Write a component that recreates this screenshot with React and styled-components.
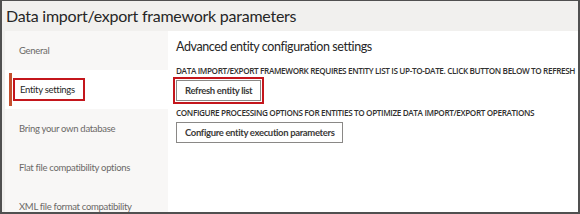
import styled, { createGlobalStyle } from "styled-components";

const GlobalStyle = createGlobalStyle`
  html, body {
    margin: 0;
    padding: 0;
    background: #ffffff;
  }
  body {
    font-family: Lato, "Open Sans", "Liberation Sans", sans-serif;
  }
`;

const navItems = [
  "General",
  "Entity settings",
  "Bring your own database",
  "Flat file compatibility options",
  "XML file format compatibility",
];

const App = () => {
  return (
    <>
      <GlobalStyle />
      <Frame>
        <Header>
          <Title>Data import/export framework parameters</Title>
        </Header>
        <Body>
          <Nav>
            {navItems.map((item) => (
              <NavItem key={item} $selected={item === "Entity settings"}>
                {item === "Entity settings" ? (
                  <>
                    <Accent />
                    <Marked>{item}</Marked>
                  </>
                ) : (
                  <NavLabel>{item}</NavLabel>
                )}
              </NavItem>
            ))}
          </Nav>
          <Content>
            <Heading>Advanced entity configuration settings</Heading>
            <Caption>
              DATA IMPORT/EXPORT FRAMEWORK REQUIRES ENTITY LIST IS UP-TO-DATE. CLICK BUTTON BELOW TO REFRESH
            </Caption>
            <ButtonRow>
              <ActionButton $marked>Refresh entity list</ActionButton>
            </ButtonRow>
            <Caption>
              CONFIGURE PROCESSING OPTIONS FOR ENTITIES TO OPTIMIZE DATA IMPORT/EXPORT OPERATIONS
            </Caption>
            <ButtonRow>
              <ActionButton>Configure entity execution parameters</ActionButton>
            </ButtonRow>
          </Content>
        </Body>
      </Frame>
    </>
  );
};

export default App;

const Frame = styled.div`
  box-sizing: border-box;
  width: 580px;
  height: 214px;
  border: 2px solid #505050;
  border-top-width: 1px;
  display: flex;
  flex-direction: column;
  overflow: hidden;
  background: #f1f0ee;
`;

const Header = styled.div`
  height: 29px;
  display: flex;
  align-items: center;
  padding-left: 4px;
  background: #f1f0ee;
`;

const Title = styled.h1`
  margin: 0;
  font-size: 16px;
  font-weight: 400;
  letter-spacing: -0.25px;
  color: #262626;
`;

const Body = styled.div`
  flex: 1;
  display: flex;
  padding-left: 3px;
  padding-top: 1px;
  min-height: 0;
`;

const Nav = styled.div`
  width: 163px;
  display: flex;
  flex-direction: column;
  background: #f8f7f6;
`;

const NavItem = styled.div`
  position: relative;
  height: 39px;
  flex-shrink: 0;
  display: flex;
  align-items: center;
  padding-left: 14px;
  background: ${(p) => (p.$selected ? "#ffffff" : "transparent")};
  margin-right: ${(p) => (p.$selected ? "-2px" : "0")};
`;

const NavLabel = styled.span`
  font-size: 9.5px;
  letter-spacing: -0.3px;
  color: #6b6967;
`;

const Accent = styled.span`
  position: absolute;
  left: 4px;
  top: 3px;
  bottom: 3px;
  width: 3px;
  background: #c4502f;
`;

const Marked = styled.span`
  margin-left: -6px;
  padding: 4px 8px 4px 5px;
  border: 2px solid #c4161c;
  font-size: 9.5px;
  letter-spacing: -0.3px;
  color: #262626;
`;

const Content = styled.div`
  flex: 1;
  background: #ffffff;
  padding: 6px 0 0 8px;
  display: flex;
  flex-direction: column;
  align-items: flex-start;
  overflow: hidden;
`;

const Heading = styled.h2`
  margin: 0 0 9px;
  font-size: 12.5px;
  line-height: 19px;
  font-weight: 400;
  letter-spacing: -0.4px;
  color: #262626;
`;

const Caption = styled.div`
  font-family: "Open Sans", "Noto Sans", sans-serif;
  font-size: 8.2px;
  font-weight: 600;
  letter-spacing: -0.38px;
  color: #323130;
  white-space: nowrap;
  line-height: 12px;
`;

const ButtonRow = styled.div`
  padding: 3px 0 6px;
  display: flex;
`;

const ActionButton = styled.button`
  height: 21px;
  padding: 0 8px;
  border: 1px solid #8a8886;
  background: #ffffff;
  font-family: inherit;
  font-size: 9.5px;
  font-weight: 700;
  letter-spacing: -0.35px;
  color: #3b3a39;
  box-shadow: ${(p) => (p.$marked ? "0 0 0 1px #ffffff, 0 0 0 3px #c4161c" : "none")};
`;
